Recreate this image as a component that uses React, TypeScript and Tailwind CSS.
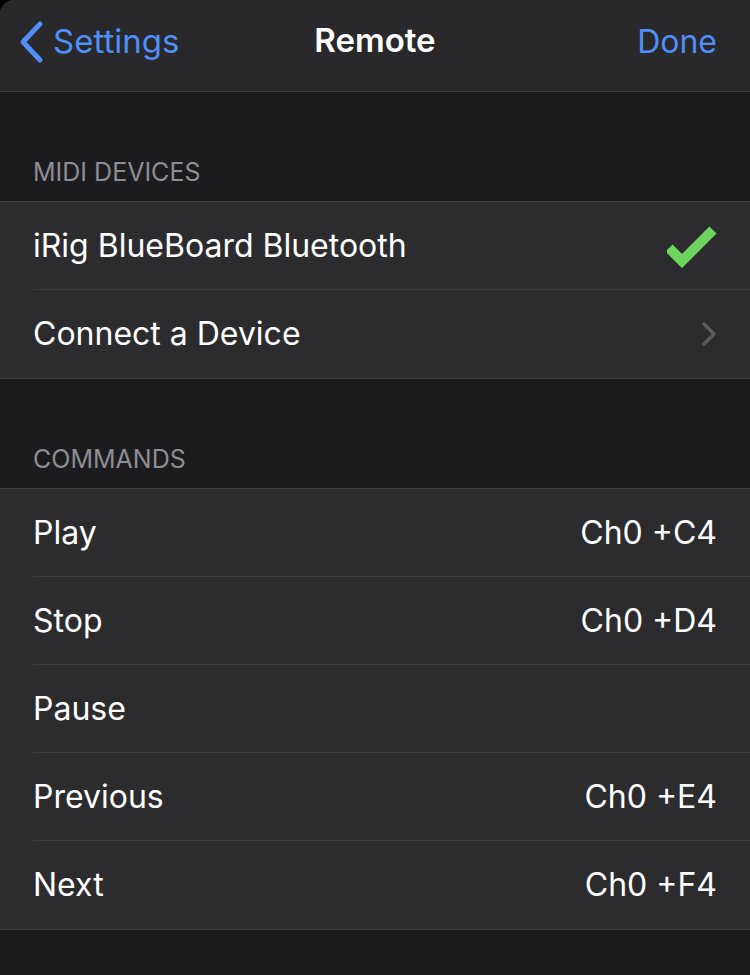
import React from "react";

const font = { fontFamily: "Inter, 'Noto Sans', sans-serif" };

function Check() {
  return (
    <svg width="50" height="44" viewBox="0 0 50 44">
      <path d="M2 24 L15 37 L46 6" fill="none" stroke="#6fd35f" strokeWidth="10" strokeLinejoin="miter" strokeLinecap="butt" />
    </svg>
  );
}

function Chevron() {
  return (
    <svg width="16" height="26" viewBox="0 0 16 26">
      <path d="M3 3 L13 13 L3 23" fill="none" stroke="#5b5b60" strokeWidth="3.4" strokeLinecap="round" strokeLinejoin="round" />
    </svg>
  );
}

function Row({ label, right, last }: { label: string; right?: React.ReactNode; last?: boolean }) {
  return (
    <div className="flex h-[88px] pl-[33px] bg-[#2c2c2e]">
      <div className={`flex flex-1 items-center justify-between pr-[33px] ${last ? "" : "border-b border-[#3d3d41]"}`}>
        <span className="text-[32px] text-white">{label}</span>
        {right}
      </div>
    </div>
  );
}

function SectionHeader({ title }: { title: string }) {
  return (
    <div className="h-[110px] flex items-end pl-[33px] pb-[10px] border-b border-[#3d3d41]">
      <span className="text-[25px] text-[#8d8d93]">{title}</span>
    </div>
  );
}

export default function App() {
  return (
    <div className="w-[750px] h-[975px] bg-black overflow-hidden" style={font}>
      <div className="w-full h-full bg-[#1c1c1e] rounded-tl-[14px] overflow-hidden">
        <div className="h-[92px] bg-[#29292b] border-b border-[#3d3d41] flex items-center justify-between relative pb-[8px]">
          <div className="flex items-center pl-[18px] gap-[9px]">
            <svg width="26" height="44" viewBox="0 0 26 44">
              <path d="M22 4 L5 22 L22 40" fill="none" stroke="#4f8ff7" strokeWidth="5" strokeLinecap="round" strokeLinejoin="round" />
            </svg>
            <span className="text-[33px] text-[#4f8ff7]">Settings</span>
          </div>
          <span className="absolute left-1/2 top-[41px] -translate-x-1/2 -translate-y-1/2 text-[33px] font-semibold text-white">Remote</span>
          <span className="pr-[33px] text-[32px] text-[#4f8ff7]">Done</span>
        </div>
        <SectionHeader title="MIDI DEVICES" />
        <div className="border-b border-[#3d3d41]">
          <Row label="iRig BlueBoard Bluetooth" right={<Check />} />
          <Row label="Connect a Device" right={<Chevron />} last />
        </div>
        <SectionHeader title="COMMANDS" />
        <div className="border-b border-[#3d3d41]">
          <Row label="Play" right={<span className="text-[32px] text-white">Ch0 +C4</span>} />
          <Row label="Stop" right={<span className="text-[32px] text-white">Ch0 +D4</span>} />
          <Row label="Pause" />
          <Row label="Previous" right={<span className="text-[32px] text-white">Ch0 +E4</span>} />
          <Row label="Next" right={<span className="text-[32px] text-white">Ch0 +F4</span>} last />
        </div>
      </div>
    </div>
  );
}
